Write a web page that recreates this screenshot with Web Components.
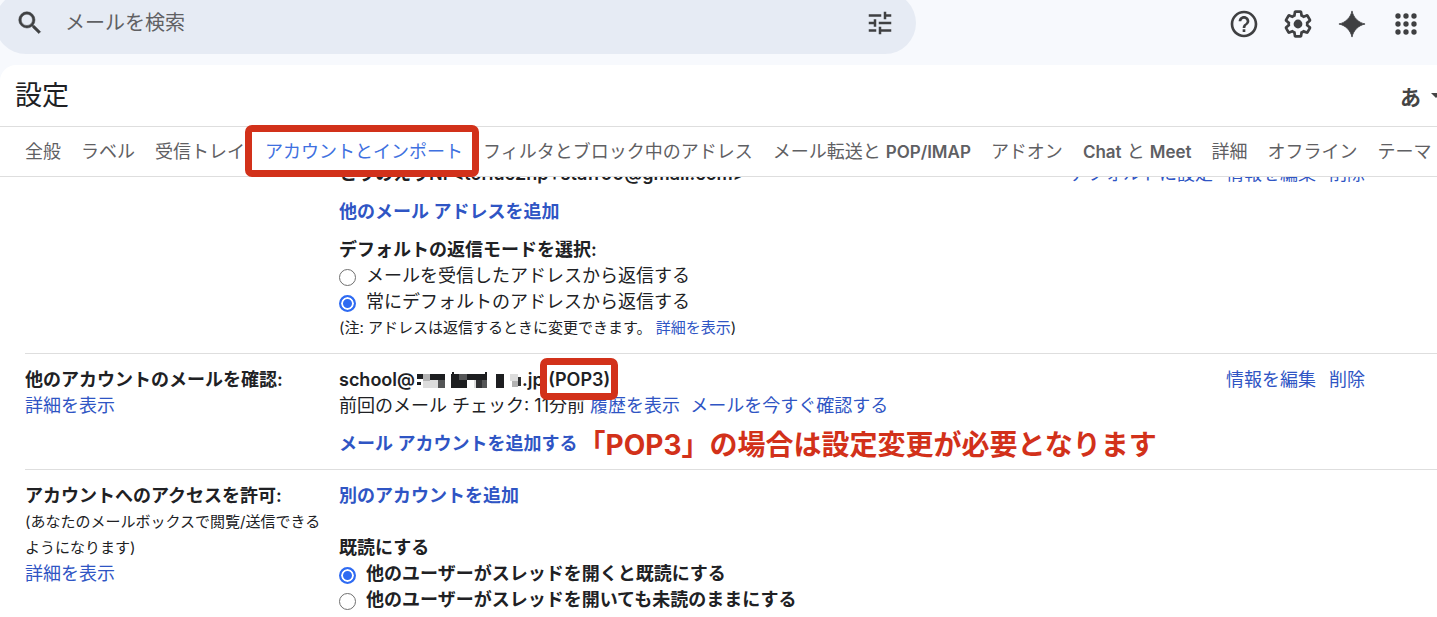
<!DOCTYPE html>
<html lang="ja">
<head>
<meta charset="utf-8">
<title>設定</title>
<style>
  body {
    margin: 0;
    min-height: 100vh;
    overflow-x: hidden;
    background: #f7f9fd;
    color: #202124;
    font: 18px/26px Inter, "Noto Sans CJK JP", sans-serif;
    --link: #2f55c4;
    --rule: #dedede;
    --mark: #d2311a;
  }
</style>
</head>
<body>
<mail-header></mail-header>
<settings-panel>
  <settings-tabs slot="tabs"></settings-tabs>

  <settings-row>
    <text-line strong>とりのえりNI &lt;toriuc2hp+staff00@gmail.com&gt;</text-line>
    <text-line strong gap><text-link>他のメール アドレスを追加</text-link></text-line>
    <text-line strong gap>デフォルトの返信モードを選択:</text-line>
    <radio-group name="reply" value="1" options="メールを受信したアドレスから返信する|常にデフォルトのアドレスから返信する"></radio-group>
    <text-line small>(注: アドレスは返信するときに変更できます。 <text-link>詳細を表示</text-link>)</text-line>
    <text-link slot="actions">デフォルトに設定</text-link>
    <text-link slot="actions">情報を編集</text-link>
    <text-link slot="actions">削除</text-link>
  </settings-row>

  <settings-row>
    <text-line slot="label" strong>他のアカウントのメールを確認:</text-line>
    <text-line slot="label"><text-link>詳細を表示</text-link></text-line>
    <text-line strong>school@<masked-text></masked-text>.jp <mark-box>(POP3)</mark-box></text-line>
    <text-line>前回のメール チェック: 11分前 <text-link>履歴を表示</text-link>&nbsp; <text-link>メールを今すぐ確認する</text-link></text-line>
    <text-line strong gap><text-link>メール アカウントを追加する</text-link><mark-note>「POP3」の場合は設定変更が必要となります</mark-note></text-line>
    <text-link slot="actions">情報を編集</text-link>
    <text-link slot="actions">削除</text-link>
  </settings-row>

  <settings-row>
    <text-line slot="label" strong>アカウントへのアクセスを許可:</text-line>
    <text-line slot="label" small>(あなたのメールボックスで閲覧/送信できるようになります)</text-line>
    <text-line slot="label"><text-link>詳細を表示</text-link></text-line>
    <text-line strong><text-link>別のアカウントを追加</text-link></text-line>
    <text-line strong gap="wide">既読にする</text-line>
    <radio-group strong name="read" value="0" options="他のユーザーがスレッドを開くと既読にする|他のユーザーがスレッドを開いても未読のままにする"></radio-group>
  </settings-row>
</settings-panel>

<script>
const define = (name, html, setup) => {
  const template = document.createElement('template');
  template.innerHTML = html;
  customElements.define(name, class extends HTMLElement {
    constructor() {
      super();
      this.attachShadow({ mode: 'open' }).append(template.content.cloneNode(true));
    }
    connectedCallback() {
      if (setup) setup(this, this.shadowRoot);
    }
  });
};

const ICONS = {
  search: '<path d="M15.5 14h-.79l-.28-.27A6.471 6.471 0 0 0 16 9.5 6.5 6.5 0 1 0 9.5 16c1.61 0 3.09-.59 4.23-1.57l.27.28v.79l5 4.99L20.49 19l-4.99-5zm-6 0C7.01 14 5 11.99 5 9.5S7.01 5 9.5 5 14 7.01 14 9.5 11.99 14 9.5 14z" stroke="currentColor" stroke-width=".4"/>',
  tune: '<path d="M3 17v2h6v-2H3zM3 5v2h10V5H3zm10 16v-2h8v-2h-8v-2h-2v6h2zM7 9v2H3v2h4v2h2V9H7zm14 4v-2H11v2h10zm-6-4h2V7h4V5h-4V3h-2v6z"/>',
  help: '<path d="M11 18h2v-2h-2v2zm1-16C6.48 2 2 6.48 2 12s4.48 10 10 10 10-4.48 10-10S17.52 2 12 2zm0 18c-4.41 0-8-3.59-8-8s3.59-8 8-8 8 3.59 8 8-3.59 8-8 8zm0-14c-2.21 0-4 1.79-4 4h2c0-1.1.9-2 2-2s2 .9 2 2c0 2-3 1.75-3 5h2c0-2.25 3-2.5 3-5 0-2.21-1.79-4-4-4z"/>',
  gear: '<path d="M13.85 22.25h-3.7c-.74 0-1.36-.54-1.45-1.27l-.27-1.89c-.27-.14-.53-.29-.79-.46l-1.8.72c-.7.26-1.47-.03-1.81-.65L2.2 15.53c-.35-.66-.2-1.44.36-1.88l1.53-1.19c-.01-.15-.02-.3-.02-.46 0-.15.01-.31.02-.46l-1.52-1.19c-.59-.45-.74-1.26-.37-1.88l1.85-3.19c.34-.62 1.11-.9 1.79-.63l1.81.73c.26-.17.52-.32.78-.46l.27-1.91c.09-.7.71-1.25 1.44-1.25h3.7c.74 0 1.36.54 1.45 1.27l.27 1.89c.27.14.53.29.79.46l1.8-.72c.71-.26 1.48.03 1.82.65l1.84 3.18c.36.66.2 1.44-.36 1.88l-1.52 1.19c.01.15.02.3.02.46s-.01.31-.02.46l1.52 1.19c.56.45.72 1.23.37 1.86l-1.86 3.22c-.34.62-1.11.9-1.8.63l-1.8-.72c-.26.17-.52.32-.78.46l-.27 1.91c-.1.68-.72 1.22-1.46 1.22zm-3.23-2h2.76l.37-2.55.53-.22c.44-.18.88-.44 1.34-.78l.45-.34 2.38.96 1.38-2.4-2.03-1.58.07-.56c.03-.26.06-.51.06-.78s-.03-.53-.06-.78l-.07-.56 2.03-1.58-1.39-2.4-2.39.96-.45-.35c-.42-.32-.87-.58-1.33-.77l-.52-.22-.37-2.55h-2.76l-.37 2.55-.53.21c-.44.19-.88.44-1.34.79l-.45.33-2.38-.95-1.39 2.39 2.03 1.58-.07.56a7 7 0 0 0-.06.79c0 .26.02.53.06.78l.07.56-2.03 1.58 1.38 2.4 2.39-.96.45.35c.43.33.86.58 1.33.77l.53.22.38 2.55z"/><circle cx="12" cy="12" r="3.3"/>',
  spark: '<path d="M12 2.2c1 4.9 4.900 8.800 9.800 9.800-4.900 1-8.800 4.900-9.800 9.800-1-4.900-4.900-8.800-9.800-9.800 4.900-1 8.800-4.900 9.800-9.800z" stroke="currentColor" stroke-width=".6"/>',
  apps: [6, 12, 18].map(y => [6, 12, 18].map(x => `<circle cx="${x}" cy="${y}" r="2"/>`).join('')).join('')
};

define('icon-button', `
  <style>
    :host { display: block; flex: none; }
    button { display: block; padding: 0; border: 0; background: none; color: #3f4042; cursor: pointer; }
    svg { display: block; width: var(--icon-size, 32px); height: var(--icon-size, 32px); fill: currentColor; }
  </style>
  <button type="button"><svg viewBox="0 0 24 24" aria-hidden="true"></svg></button>`,
  (host, root) => {
    root.querySelector('svg').innerHTML = ICONS[host.getAttribute('icon')];
    root.querySelector('button').setAttribute('aria-label', host.getAttribute('label'));
  });

define('mail-header', `
  <style>
    :host { display: flex; justify-content: space-between; align-items: flex-start; height: 65px; overflow: hidden; }
    form {
      --icon-size: 30px;
      box-sizing: border-box; flex: 0 1 921px; height: 62px; margin: -8px 0 0 -5px; padding: 0 21px 0 20px;
      display: flex; align-items: center; gap: 20px; border-radius: 31px; background: #e6ebf4;
    }
    input {
      flex: 1; min-width: 0; padding: 0; border: 0; outline: 0; background: none;
      font: 20px/30px Inter, "Noto Sans CJK JP", sans-serif; color: #202124;
    }
    input::placeholder { color: #5f6063; opacity: 1; }
    nav { display: flex; gap: 22px; padding: 8px 15px 0 0; }
  </style>
  <form role="search">
    <icon-button icon="search" label="検索"></icon-button>
    <input type="text" placeholder="メールを検索" aria-label="メールを検索">
    <icon-button icon="tune" label="検索オプション"></icon-button>
  </form>
  <nav>
    <icon-button icon="help" label="サポート"></icon-button>
    <icon-button icon="gear" label="設定"></icon-button>
    <icon-button icon="spark" label="Gemini"></icon-button>
    <icon-button icon="apps" label="アプリ"></icon-button>
  </nav>`);

define('settings-panel', `
  <style>
    :host { display: block; background: #fff; border-radius: 16px 0 0 0; overflow: hidden; }
    header { display: flex; justify-content: space-between; align-items: center; height: 61px; padding-left: 15px; }
    h1 { margin: 0; font-size: 27px; line-height: 36px; font-weight: 400; }
    button {
      display: flex; align-items: center; gap: 10px; margin-right: -4px; padding: 0; border: 0; background: none;
      font: 700 21px/26px "Noto Sans CJK JP", sans-serif; color: #444;
    }
    button::after { content: ""; border: 5px solid transparent; border-top-color: #444; border-bottom: 0; }
    .view { overflow: hidden; }
    .rows { margin-top: -30px; }
  </style>
  <header><h1>設定</h1><button type="button" aria-label="入力ツール">あ</button></header>
  <slot name="tabs"></slot>
  <div class="view"><div class="rows"><slot></slot></div></div>`);

define('settings-tabs', `
  <style>
    :host {
      display: flex; gap: 20px; position: relative; z-index: 1; box-sizing: border-box; height: 51px; padding: 0 8px 0 25px; align-items: center;
      border: 1px solid var(--rule); border-width: 1px 0; background: #fff; white-space: nowrap;
    }
    a { color: #5f6063; text-decoration: none; font-weight: 400; }
    b { font-size: 17px; font-weight: 600; }
    a[aria-current] { color: #3e70e0; }
    mark-box { --mark-inset: -14px -16px -12px -20px; }
  </style>
  <a href="#general">全般</a>
  <a href="#labels">ラベル</a>
  <a href="#inbox">受信トレイ</a>
  <mark-box><a href="#accounts" aria-current="page">アカウントとインポート</a></mark-box>
  <a href="#filters">フィルタとブロック中のアドレス</a>
  <a href="#fwdandpop">メール転送と <b>POP/IMAP</b></a>
  <a href="#addons">アドオン</a>
  <a href="#chat"><b>Chat</b> と <b>Meet</b></a>
  <a href="#advanced">詳細</a>
  <a href="#offline">オフライン</a>
  <a href="#themes">テーマ</a>`);

define('mark-box', `
  <style>
    :host { display: inline-block; position: relative; }
    :host::after {
      content: ""; position: absolute; inset: var(--mark-inset, -9px -8px -7px); z-index: 2; pointer-events: none;
      border: 7px solid var(--mark); border-radius: 7px;
    }
  </style><slot></slot>`);

define('mark-note', `
  <style>
    :host { display: inline-block; color: var(--mark); font-size: 28px; line-height: 26px; font-weight: 700; vertical-align: middle; white-space: nowrap; }
  </style><slot></slot>`);

define('masked-text', `
  <style>
    :host { display: inline-block; width: 107px; height: 16px; vertical-align: -2px; }
    svg { display: block; width: 100%; height: 100%; }
  </style>
  <svg viewBox="0 0 107 16" shape-rendering="crispEdges" aria-hidden="true">
    <path fill="#1d1e20" d="M2 2h6v5H2zM15 2h15v6H15zM36 2h8v14h-8zM52 2h20v6H52zM44 8h8v8h-8zM81 2h8v14h-8zM2 10h4v3H2zM37 0h2v2h-2zM70 0h2v2h-2z"/>
    <path fill="#b2b2b2" d="M8 2h7v7H8zM97 9h6v6h-6z"/>
    <path fill="#dcdcdc" d="M8 9h7v7H8zM15 8h8v8h-8zM59 8h6v8h-6zM95 2h8v7h-8z"/>
    <path fill="#545556" d="M23 8h7v8h-7zM44 2h8v6h-8zM67 8h5v8h-5z"/>
    <path fill="#303133" d="M61 8h6v8h-6zM103 5h3v9h-3z"/>
  </svg>`);

define('settings-row', `
  <style>
    :host {
      display: grid; grid-template-columns: 302px minmax(0, 1fr) auto; column-gap: 12px;
      margin-left: 25px; padding: 13px 72px 12px 0; border-top: 1px solid var(--rule);
    }
    .actions { display: flex; align-items: flex-start; gap: 13px; white-space: nowrap; }
  </style>
  <div><slot name="label"></slot></div>
  <div><slot></slot></div>
  <div class="actions"><slot name="actions"></slot></div>`);

define('text-line', `
  <style>
    :host { display: block; line-height: 26px; }
    :host([strong]) { font-weight: 600; }
    :host([small]) { font-size: 15px; }
    :host([gap]) { height: 26px; margin-top: 12px; white-space: nowrap; }
    :host([gap="wide"]) { margin-top: 26px; }
  </style><slot></slot>`);

define('text-link', `
  <style>
    a { color: var(--link); text-decoration: none; }
  </style><a href="#accounts"><slot></slot></a>`);

define('radio-group', `
  <style>
    :host { display: block; }
    :host([strong]) { font-weight: 600; }
    label { display: flex; align-items: center; gap: 10px; line-height: 26px; }
    input {
      appearance: none; box-sizing: border-box; flex: none; width: 17px; height: 17px; margin: 2px 0 0;
      border: 1px solid #6f6f6f; border-radius: 50%; background: #fff;
    }
    input:checked { border: 2px solid #2f6bf2; background: #2f6bf2; box-shadow: inset 0 0 0 2px #fff; }
  </style>`,
  (host, root) => {
    host.getAttribute('options').split('|').forEach((text, i) => {
      const label = document.createElement('label');
      const input = document.createElement('input');
      input.type = 'radio';
      input.name = host.getAttribute('name');
      input.checked = String(i) === host.getAttribute('value');
      label.append(input, text);
      root.append(label);
    });
  });
</script>
</body>
</html>
